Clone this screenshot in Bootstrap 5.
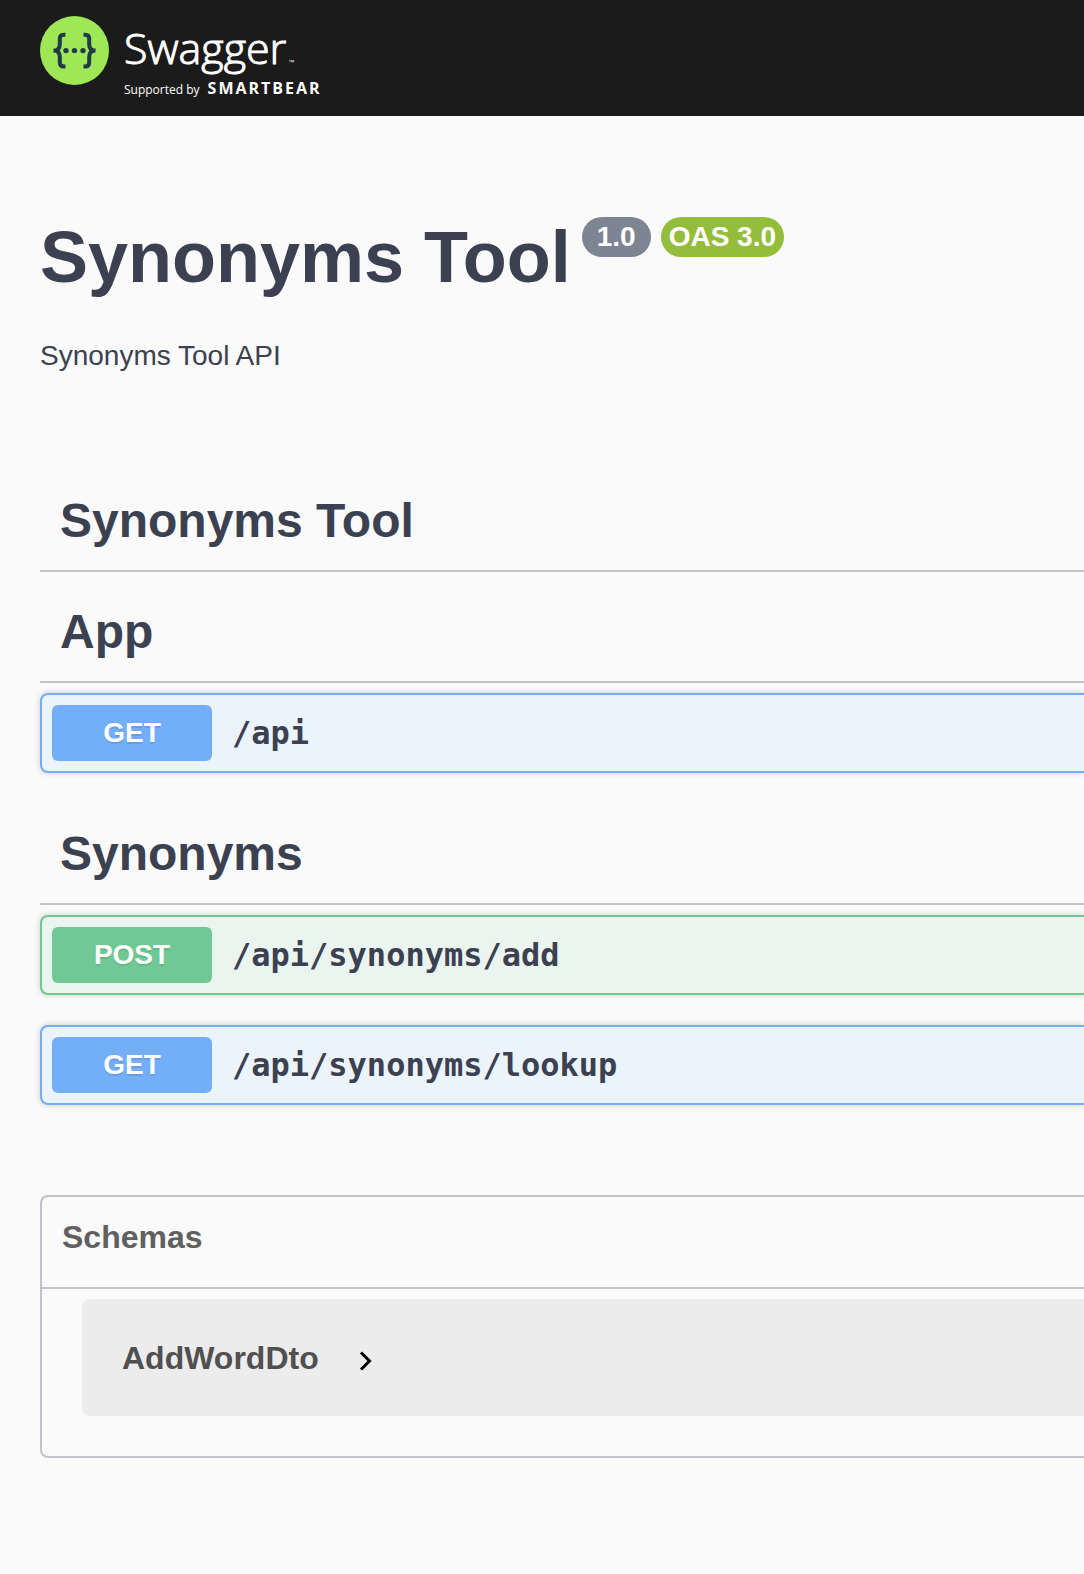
<!DOCTYPE html>
<html lang="en">
<head>
<meta charset="utf-8">
<meta name="viewport" content="width=device-width, initial-scale=1">
<title>Synonyms Tool - Swagger UI</title>
<link href="https://cdn.jsdelivr.net/npm/bootstrap@5.3.0/dist/css/bootstrap.min.css" rel="stylesheet">
<style>
body{background:#fafafa;color:#3b4151;font-family:"Liberation Sans",Arial,sans-serif;font-size:28px}
.topbar{background:#1b1b1b;height:116px;padding:16px 0 0 40px}
.brand{gap:15px;color:#fff;font-family:"Open Sans",sans-serif}
.brand-text{padding-top:6px}
.brand-name{font-size:43px;line-height:52px;font-weight:300;-webkit-text-stroke:1px #fff}
.brand-tm{font-family:"Liberation Sans",sans-serif;font-size:6px;line-height:8px;-webkit-text-stroke:0;margin-left:2px}
.brand-sub{font-size:12px;line-height:28px;gap:8px}
.brand-owner{font-size:16px;font-weight:700;letter-spacing:2px}
.page{padding-left:40px}
.info{padding:101px 0 85px}
.api-title{font-size:72px;line-height:72px;padding-top:4px}
.heading-row{gap:11px;margin-bottom:43px}
.pills{gap:10px}
.pill{height:40px;line-height:40px;font-weight:700;color:#fff;border-radius:20px;background:#7d8492;padding:0 15px}
.pill-oas{background:#95bd3c;padding:0 8px}
.about{line-height:40px}
.tag-title{font-size:48px;line-height:59px;padding:30px 20px 20px;border-bottom:2px solid #c2c3c9}
.ops{gap:30px;padding:10px 0 21px}
.op{--tone:#73aef8;--tint:#ebf3fb;height:80px;gap:20px;padding:0 10px;color:inherit;background:var(--tint);border:2px solid var(--tone);border-right:0;border-radius:8px 0 0 8px;box-shadow:0 0 6px rgba(0,0,0,.19)}
.op-post{--tone:#70c995;--tint:#ebf5f0}
.verb{width:160px;line-height:56px;border-radius:6px;background:var(--tone);color:#fff;font-weight:700;text-shadow:0 2px 0 rgba(0,0,0,.1)}
.route{font:700 32px "DejaVu Sans Mono",monospace}
.schemas{margin:69px 0 116px;border:2px solid #c2c3c9;border-right:0;border-radius:8px 0 0 8px;padding-bottom:40px}
.schemas-title{font-size:32px;line-height:40px;color:#606060;padding:20px 20px 30px;border-bottom:2px solid #c2c3c9}
.model{margin:10px 0 0 40px;height:117px;padding-left:40px;gap:40px;background:#ececec;border-radius:8px 0 0 8px;color:#505050;font-size:32px;font-weight:700}
.chevron{margin-top:6px}
</style>
<script src="https://cdn.jsdelivr.net/npm/bootstrap@5.3.0/dist/js/bootstrap.bundle.min.js"></script>
</head>
<body>
<header class="topbar">
  <a href="#" class="brand d-inline-flex align-items-start text-decoration-none">
    <svg width="69" height="69" viewBox="0 0 69 69" aria-hidden="true">
      <circle cx="34.5" cy="34.5" r="34.5" fill="#9fe855"/>
      <g fill="none" stroke="#203a4a" stroke-width="4">
        <path d="M25.5 18.8h-1.7q-4 0-4 4v5.6q0 6-6.3 6.2q6.3 .2 6.3 6.2v5.6q0 4 4 4h1.7"/>
        <path d="M43.5 18.8h1.7q4 0 4 4v5.6q0 6 6.3 6.2q-6.3 .2-6.3 6.2v5.6q0 4-4 4h-1.7"/>
      </g>
      <g fill="#203a4a"><circle cx="26" cy="34.6" r="2.7"/><circle cx="34.5" cy="34.6" r="2.7"/><circle cx="43" cy="34.6" r="2.7"/></g>
    </svg>
    <span class="brand-text d-flex flex-column">
      <span class="brand-name">Swagger<span class="brand-tm">™</span></span>
      <span class="brand-sub d-flex align-items-baseline"><span>Supported by</span><span class="brand-owner">SMARTBEAR</span></span>
    </span>
  </a>
</header>
<main class="page">
  <section class="info">
    <div class="heading-row d-flex align-items-start">
      <h1 class="api-title fw-bold mb-0">Synonyms Tool</h1>
      <div class="pills d-flex"><span class="pill">1.0</span><span class="pill pill-oas">OAS 3.0</span></div>
    </div>
    <p class="about mb-0">Synonyms Tool API</p>
  </section>
  <section>
    <h2 class="tag-title fw-bold mb-0">Synonyms Tool</h2>
  </section>
  <section>
    <h2 class="tag-title fw-bold mb-0">App</h2>
    <div class="ops d-flex flex-column">
      <button type="button" class="op d-flex align-items-center text-start"><span class="verb text-center">GET</span><span class="route">/api</span></button>
    </div>
  </section>
  <section>
    <h2 class="tag-title fw-bold mb-0">Synonyms</h2>
    <div class="ops d-flex flex-column">
      <button type="button" class="op op-post d-flex align-items-center text-start"><span class="verb text-center">POST</span><span class="route">/api/synonyms/add</span></button>
      <button type="button" class="op d-flex align-items-center text-start"><span class="verb text-center">GET</span><span class="route">/api/synonyms/lookup</span></button>
    </div>
  </section>
  <section class="schemas">
    <h3 class="schemas-title fw-bold mb-0">Schemas</h3>
    <div class="d-flex flex-column">
      <button type="button" class="model d-flex align-items-center border-0">AddWordDto
        <svg class="chevron" width="14" height="20" viewBox="0 0 14 20" fill="none" stroke="#000" stroke-width="3" aria-hidden="true"><path d="M2 1.500 10.500 10 2 18.500"/></svg>
      </button>
    </div>
  </section>
</main>
</body>
</html>
